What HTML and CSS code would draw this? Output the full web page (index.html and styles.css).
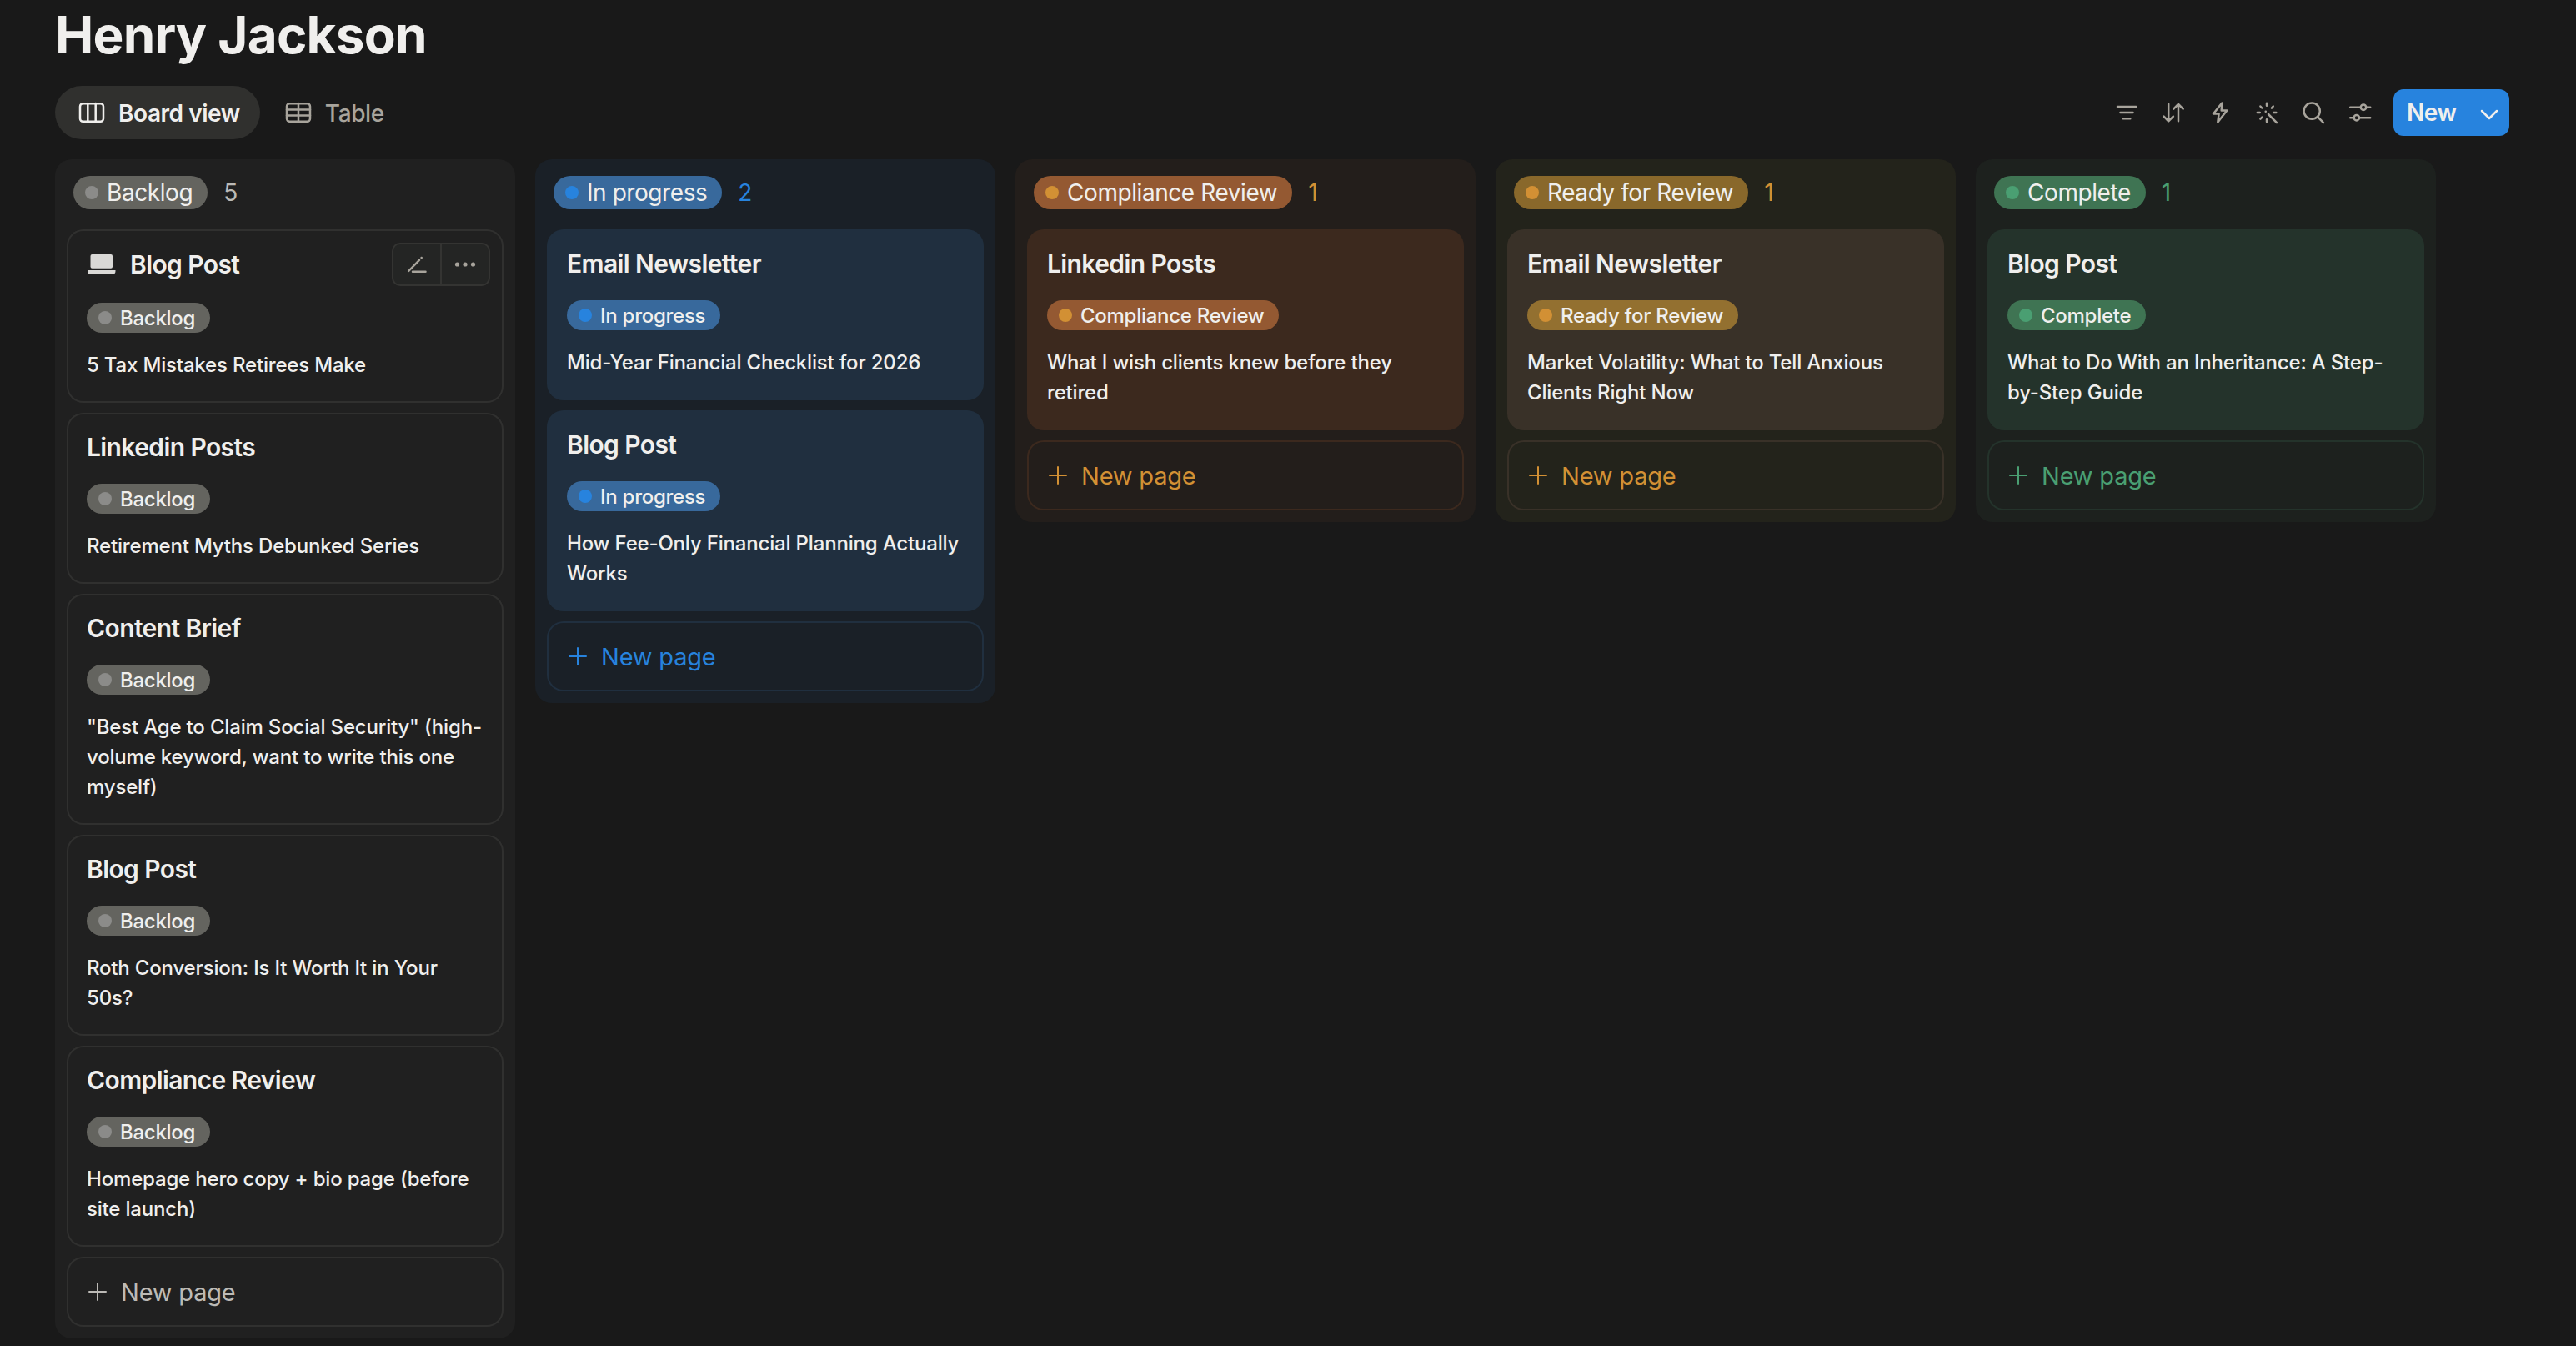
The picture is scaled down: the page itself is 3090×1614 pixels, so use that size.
FILE: index.html
```
<!DOCTYPE html>
<html lang="en">
<head>
    <meta charset="UTF-8">
    <title>Henry Jackson</title>
    <meta name="viewport" content="width=device-width, initial-scale=1">
    <link rel="stylesheet" href="styles.css">
</head>
<body>

<svg class="sprite">
    <symbol id="plus" viewBox="0 0 22 22">
        <path d="M11 1v20M1 11h20"/>
    </symbol>
</svg>

<div class="page">
    <h1 class="page-title">Henry Jackson</h1>

    <div class="toolbar">
        <div class="tabs">
            <div class="tab active">
                <svg class="icon" width="32" height="28" viewBox="0 0 32 28">
                    <rect x="2" y="3.2" width="28" height="21.6" rx="3.5"/>
                    <path d="M11.3 3v22M20.7 3v22"/>
                </svg>
                <span class="tab-label">Board view</span>
            </div>
            <div class="tab">
                <svg class="icon" width="32" height="28" viewBox="0 0 32 28">
                    <rect x="2" y="3.2" width="28" height="21.6" rx="3.5"/>
                    <path d="M2 10.6h28M2 17.6h28M16 3v22"/>
                </svg>
                <span class="tab-label">Table</span>
            </div>
        </div>
        <div class="actions">
            <svg class="icon" width="32" height="32" viewBox="0 0 32 32">
                <path d="M5 9h22.200M8.500 16h15M11.800 23.200h8.500"/>
            </svg>
            <svg class="icon" width="32" height="32" viewBox="0 0 32 32">
                <path d="M10.200 5.700v20.500M4.600 20.600l5.600 5.800 5.700-5.800M22 26.300V5.800M16.300 11.600L22 5.800l5.700 5.800"/>
            </svg>
            <svg class="icon" width="32" height="32" viewBox="0 0 32 32">
                <path d="M18.300 4.500L8 17.600h6.600l-1.300 10L24.300 13.600h-6.600z"/>
            </svg>
            <svg class="icon" width="32" height="32" viewBox="0 0 32 32">
                <path d="M14.700 14.700h.1M18 18l10 10.200M16 4.800v3M16 24.200v2.800M4.800 16h3M24.300 16h3M8.400 8.500l1.800 2M23.800 8.500l-1.900 2.100M8.400 23.600l1.900-2"/>
            </svg>
            <svg class="icon" width="32" height="32" viewBox="0 0 32 32">
                <circle cx="14.200" cy="14.200" r="9.600"/>
                <path d="M21.400 21.400l6.600 6.800"/>
            </svg>
            <svg class="icon" width="32" height="32" viewBox="0 0 32 32">
                <path d="M4.200 9.700h12.300M23.500 9.700h4.700M4.200 22.200h4.300M15.200 22.200h13"/>
                <circle cx="20" cy="9.700" r="3.200"/>
                <circle cx="11.800" cy="22.200" r="3.200"/>
            </svg>
            <button class="new-button">
                <span>New</span>
                <svg class="icon" width="22" height="14" viewBox="0 0 22 14">
                    <path d="M2 3l9 9 9-9"/>
                </svg>
            </button>
        </div>
    </div>

    <div class="board">
        <div class="column gray">
            <div class="column-header">
                <div class="status"><i class="dot"></i>Backlog</div>
                <div class="count">5</div>
            </div>
            <div class="card hovered">
                <div class="card-title">
                    <svg class="laptop" width="34" height="24" viewBox="0 0 34 24">
                        <rect x="3.500" y="0" width="26.500" height="16.700" rx="2"/>
                        <path d="M0 19h33.500v1a4 4 0 0 1-4 4h-25.500a4 4 0 0 1-4-4z"/>
                    </svg>
                    Blog Post
                </div>
                <div class="card-actions">
                    <div class="card-action">
                        <svg class="icon" width="28" height="28" viewBox="0 0 28 28">
                            <path d="M9 22.700h15.500M4.200 22L17 8.800M19.600 5.900h.1"/>
                        </svg>
                    </div>
                    <div class="card-action">
                        <svg class="dots" width="28" height="28" viewBox="0 0 28 28">
                            <circle cx="4.500" cy="14" r="2.600"/>
                            <circle cx="14" cy="14" r="2.600"/>
                            <circle cx="23.500" cy="14" r="2.600"/>
                        </svg>
                    </div>
                </div>
                <div class="tag"><i class="dot"></i>Backlog</div>
                <div class="card-text">5 Tax Mistakes Retirees Make</div>
            </div>
            <div class="card">
                <div class="card-title">Linkedin Posts</div>
                <div class="tag"><i class="dot"></i>Backlog</div>
                <div class="card-text">Retirement Myths Debunked Series</div>
            </div>
            <div class="card">
                <div class="card-title">Content Brief</div>
                <div class="tag"><i class="dot"></i>Backlog</div>
                <div class="card-text">"Best Age to Claim Social Security" (high-<br>volume keyword, want to write this one<br>myself)</div>
            </div>
            <div class="card">
                <div class="card-title">Blog Post</div>
                <div class="tag"><i class="dot"></i>Backlog</div>
                <div class="card-text">Roth Conversion: Is It Worth It in Your<br>50s?</div>
            </div>
            <div class="card">
                <div class="card-title">Compliance Review</div>
                <div class="tag"><i class="dot"></i>Backlog</div>
                <div class="card-text">Homepage hero copy + bio page (before<br>site launch)</div>
            </div>
            <div class="new-page"><svg class="plus"><use href="#plus"/></svg>New page</div>
        </div>

        <div class="column blue">
            <div class="column-header">
                <div class="status"><i class="dot"></i>In progress</div>
                <div class="count">2</div>
            </div>
            <div class="card">
                <div class="card-title">Email Newsletter</div>
                <div class="tag"><i class="dot"></i>In progress</div>
                <div class="card-text">Mid-Year Financial Checklist for 2026</div>
            </div>
            <div class="card">
                <div class="card-title">Blog Post</div>
                <div class="tag"><i class="dot"></i>In progress</div>
                <div class="card-text">How Fee-Only Financial Planning Actually<br>Works</div>
            </div>
            <div class="new-page"><svg class="plus"><use href="#plus"/></svg>New page</div>
        </div>

        <div class="column orange">
            <div class="column-header">
                <div class="status"><i class="dot"></i>Compliance Review</div>
                <div class="count">1</div>
            </div>
            <div class="card">
                <div class="card-title">Linkedin Posts</div>
                <div class="tag"><i class="dot"></i>Compliance Review</div>
                <div class="card-text">What I wish clients knew before they<br>retired</div>
            </div>
            <div class="new-page"><svg class="plus"><use href="#plus"/></svg>New page</div>
        </div>

        <div class="column yellow">
            <div class="column-header">
                <div class="status"><i class="dot"></i>Ready for Review</div>
                <div class="count">1</div>
            </div>
            <div class="card">
                <div class="card-title">Email Newsletter</div>
                <div class="tag"><i class="dot"></i>Ready for Review</div>
                <div class="card-text">Market Volatility: What to Tell Anxious<br>Clients Right Now</div>
            </div>
            <div class="new-page"><svg class="plus"><use href="#plus"/></svg>New page</div>
        </div>

        <div class="column green">
            <div class="column-header">
                <div class="status"><i class="dot"></i>Complete</div>
                <div class="count">1</div>
            </div>
            <div class="card">
                <div class="card-title">Blog Post</div>
                <div class="tag"><i class="dot"></i>Complete</div>
                <div class="card-text">What to Do With an Inheritance: A Step-<br>by-Step Guide</div>
            </div>
            <div class="new-page"><svg class="plus"><use href="#plus"/></svg>New page</div>
        </div>
    </div>
</div>

</body>
</html>
```

FILE: styles.css
```
* {
    font-family: Inter, "Liberation Sans", sans-serif;
    box-sizing: border-box;
}

body {
    background-color: #191919;
    color: #f0efed;
    margin: 0;
    height: 1614px;
    overflow: hidden;
}

.sprite {
    display: none;
}

.page {
    padding: 0 80px 0 66px;
}

.page-title {
    margin: 0;
    height: 103px;
    font-size: 62px;
    line-height: 83px;
    font-weight: 700;
    letter-spacing: -0.8px;
    white-space: nowrap;
}

.icon {
    flex: none;
    fill: none;
    stroke: currentColor;
    stroke-width: 2.5;
    stroke-linecap: round;
    stroke-linejoin: round;
}

.toolbar {
    display: flex;
    justify-content: space-between;
    height: 64px;
    margin-bottom: 24px;
}

.tabs {
    display: flex;
    gap: 2px;
}

.tab {
    display: flex;
    align-items: center;
    height: 64px;
    padding: 0 24px 0 28px;
    border-radius: 32px;
    color: #a8a49c;
    font-size: 28px;
    font-weight: 500;
    letter-spacing: -0.4px;
    white-space: nowrap;
}

.tab.active {
    background: #30302e;
    color: #f0efed;
    font-weight: 600;
    letter-spacing: -0.45px;
}

.tab-label {
    margin-left: 16px;
    padding-top: 2px;
}

.actions {
    display: flex;
    align-items: center;
    gap: 24px;
    color: #a8a49c;
}

.new-button {
    display: flex;
    align-items: center;
    justify-content: space-between;
    width: 139px;
    height: 56px;
    padding: 0 13px 0 16px;
    border: none;
    border-radius: 12px;
    background: #2783de;
    color: #f0efed;
    font-size: 28px;
    font-weight: 600;
    letter-spacing: -0.5px;
}

.new-button .icon {
    margin-top: 4px;
}

.board {
    display: flex;
    align-items: flex-start;
    gap: 24px;
}

.column {
    display: flex;
    flex-direction: column;
    gap: 12px;
    flex: none;
    width: 552px;
    padding: 14px;
    border-radius: 20px;
    background: var(--column);
}

.column-header {
    display: flex;
    align-items: center;
    height: 58px;
    padding: 0 8px 6px;
    font-size: 28px;
    letter-spacing: -0.43px;
    white-space: nowrap;
}

.status,
.tag {
    display: flex;
    align-items: center;
    width: max-content;
    background: var(--tag);
}

.status {
    height: 40px;
    padding: 0 18px 0 14px;
    border-radius: 20px;
}

.dot {
    width: 16px;
    height: 16px;
    margin-right: 10px;
    border-radius: 50%;
    background: var(--dot);
}

.count {
    margin-left: 19px;
    color: var(--text);
}

.card {
    position: relative;
    padding: 17px 24px 27px;
    border-radius: 20px;
    background: var(--card);
}

.card-title {
    display: flex;
    align-items: center;
    height: 48px;
    margin-bottom: 20px;
    font-size: 30px;
    font-weight: 600;
    letter-spacing: -0.6px;
    white-space: nowrap;
}

.tag {
    height: 36px;
    padding: 0 18px 0 14px;
    border-radius: 18px;
    font-size: 24px;
    font-weight: 500;
    letter-spacing: -0.27px;
}

.card-text {
    margin-top: 21px;
    font-size: 24px;
    font-weight: 500;
    line-height: 36px;
    letter-spacing: -0.18px;
    white-space: nowrap;
}

.new-page {
    display: flex;
    align-items: center;
    height: 84px;
    padding: 0 24px;
    border-radius: 20px;
    box-shadow: inset 0 0 0 2px var(--border);
    color: var(--text);
    font-size: 29px;
    letter-spacing: -0.2px;
}

.plus {
    width: 22px;
    height: 22px;
    margin: 0 17px 0 2px;
    fill: none;
    stroke: currentColor;
    stroke-width: 2;
    stroke-linecap: round;
}

/* hovered card shows the page icon and quick actions */
.card.hovered {
    padding-top: 18px;
}

.card.hovered .card-title {
    margin-bottom: 22px;
}

.laptop {
    margin: 0 17px 0 1px;
    fill: #d9d8d6;
}

.card-actions {
    position: absolute;
    top: 16px;
    right: 16px;
    display: flex;
    width: 118px;
    height: 52px;
    border: 2px solid #343432;
    border-radius: 10px;
    background: #242524;
    color: #a8a49c;
}

.card-action {
    display: flex;
    flex: 1;
    align-items: center;
    justify-content: center;
}

.card-action + .card-action {
    border-left: 2px solid #343432;
}

.dots {
    fill: currentColor;
}

.gray {
    --column: #202020;
    --card: #202020;
    --border: #30302f;
    --tag: #64645f;
    --dot: #8b8b89;
    --text: #bcbab6;
}

.gray .card {
    box-shadow: inset 0 0 0 2px var(--border);
}

.blue {
    --column: #1a2027;
    --card: #202f3f;
    --border: #202f3f;
    --tag: #38699c;
    --dot: #2783de;
    --text: #2783de;
}

.orange {
    --column: #231e1b;
    --card: #3c291e;
    --border: #3c291e;
    --tag: #945932;
    --dot: #d29034;
    --text: #d29034;
}

.yellow {
    --column: #23231b;
    --card: #393128;
    --border: #393128;
    --tag: #89682b;
    --dot: #d29034;
    --text: #d29034;
}

.yellow .tag {
    background: #937030;
}

.green {
    --column: #1d211e;
    --card: #24332b;
    --border: #24332b;
    --tag: #3f7453;
    --dot: #4a9f72;
    --text: #4a9f72;
}
```
